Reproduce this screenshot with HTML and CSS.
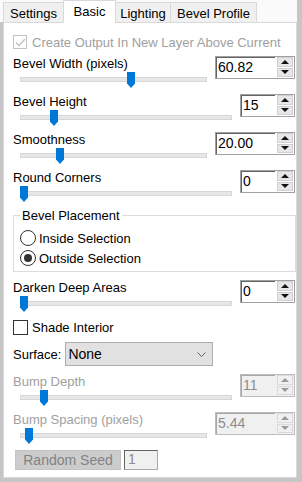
FILE: index.html
```html
<!DOCTYPE html>
<html>
<head>
  <link rel="stylesheet" href="styles.css">
</head>
<body>

<div class="window">
  <div class="tabs">
    <div class="tab tab-settings">Settings</div>
    <div class="tab tab-basic active">Basic</div>
    <div class="tab tab-lighting">Lighting</div>
    <div class="tab tab-profile">Bevel Profile</div>
  </div>

  <div class="page">
    <!-- disabled option -->
    <div class="check disabled">
      <span class="box">
        <svg width="11" height="9" viewBox="0 0 11 9"><polyline points="1,4.5 4,7.5 10,1" fill="none" stroke="#c2c2c2" stroke-width="1.3"/></svg>
      </span>
      Create Output In New Layer Above Current
    </div>

    <div class="slider-row">
      <div class="slider-col">
        <div class="label">Bevel Width (pixels)</div>
        <div class="track"><span class="thumb" style="left: 106px"></span></div>
      </div>
      <div class="spin wide">
        <span class="val">60.82</span>
        <span class="arrows"><span class="up"></span><span class="down"></span></span>
      </div>
    </div>

    <div class="slider-row">
      <div class="slider-col">
        <div class="label">Bevel Height</div>
        <div class="track"><span class="thumb" style="left: 29px"></span></div>
      </div>
      <div class="spin">
        <span class="val">15</span>
        <span class="arrows"><span class="up"></span><span class="down"></span></span>
      </div>
    </div>

    <div class="slider-row">
      <div class="slider-col">
        <div class="label">Smoothness</div>
        <div class="track"><span class="thumb" style="left: 35px"></span></div>
      </div>
      <div class="spin wide">
        <span class="val">20.00</span>
        <span class="arrows"><span class="up"></span><span class="down"></span></span>
      </div>
    </div>

    <div class="slider-row">
      <div class="slider-col">
        <div class="label">Round Corners</div>
        <div class="track"><span class="thumb" style="left: -1px"></span></div>
      </div>
      <div class="spin">
        <span class="val">0</span>
        <span class="arrows"><span class="up"></span><span class="down"></span></span>
      </div>
    </div>

    <fieldset class="group">
      <legend>Bevel Placement</legend>
      <div class="radio"><span class="circle"></span>Inside Selection</div>
      <div class="radio"><span class="circle on"></span>Outside Selection</div>
    </fieldset>

    <div class="slider-row darken">
      <div class="slider-col">
        <div class="label">Darken Deep Areas</div>
        <div class="track"><span class="thumb" style="left: -1px"></span></div>
      </div>
      <div class="spin">
        <span class="val">0</span>
        <span class="arrows"><span class="up"></span><span class="down"></span></span>
      </div>
    </div>

    <div class="check shade">
      <span class="box"></span>
      Shade Interior
    </div>

    <div class="surface">
      <span>Surface:</span>
      <div class="select">
        <span>None</span>
        <svg width="9" height="5" viewBox="0 0 9 5"><polyline points="0.5,0.5 4.5,4.5 8.5,0.5" fill="none" stroke="#606060" stroke-width="1"/></svg>
      </div>
    </div>

    <div class="slider-row disabled bump">
      <div class="slider-col">
        <div class="label">Bump Depth</div>
        <div class="track"><span class="thumb" style="left: 19px"></span></div>
      </div>
      <div class="spin">
        <span class="val">11</span>
        <span class="arrows"><span class="up"></span><span class="down"></span></span>
      </div>
    </div>

    <div class="slider-row disabled">
      <div class="slider-col">
        <div class="label">Bump Spacing (pixels)</div>
        <div class="track"><span class="thumb" style="left: 4px"></span></div>
      </div>
      <div class="spin wide">
        <span class="val">5.44</span>
        <span class="arrows"><span class="up"></span><span class="down"></span></span>
      </div>
    </div>

    <div class="seed-row">
      <div class="seed-btn">Random Seed</div>
      <div class="seed-val">1</div>
    </div>
  </div>
</div>

</body>
</html>
```

FILE: styles.css
```css
* {
  box-sizing: border-box;
}

body {
  margin: 0;
  font: 13px "Liberation Sans", Arial, sans-serif;
  color: #000;
}

/* outer window with the grey frame */
.window {
  width: 302px;
  height: 482px;
  display: flex;
  flex-direction: column;
  background: #c6c6c6;
  padding: 0 5px 4px 0;
}

/* tab strip */
.tabs {
  display: flex;
  align-items: flex-end;
  height: 22px;
  padding-left: 3px;
  background: #fafafa;
}
.tab {
  height: 20px;
  padding-top: 3px;
  line-height: 15px;
  text-align: center;
  white-space: nowrap;
  background: #f0f0f0;
  border: 1px solid #d9d9d9;
  border-bottom: none;
  margin-left: -1px;
}
.tab-settings { width: 61px; margin-left: 0; }
.tab-basic { width: 53px; }
.tab-lighting { width: 56px; }
.tab-profile { width: 87px; }
.tab.active {
  position: relative;
  z-index: 1;
  height: 23px;
  margin-bottom: -1px;
  background: #fff;
}

/* tab page */
.page {
  flex: 1;
  display: flex;
  flex-direction: column;
  margin-left: 3px;
  padding: 11px 1px 0 9px;
  background: #fff;
  border: 1px solid #d9d9d9;
}

/* check boxes */
.check {
  display: flex;
  align-items: center;
  gap: 5px;
  height: 16px;
  line-height: 15px;
  white-space: nowrap;
}
.check .box {
  width: 14px;
  height: 14px;
  display: flex;
  align-items: center;
  justify-content: center;
  border: 1px solid #333;
  background: #fff;
}
.check.disabled {
  color: #a0a0a0;
}
.check.disabled .box {
  border-color: #c4c4c4;
}
.check.shade {
  margin-top: 1px;
  height: 17px;
  gap: 4px;
}
.check.shade .box {
  width: 15px;
  height: 15px;
}

/* slider + spin rows */
.slider-row {
  display: flex;
  height: 38px;
}
.check + .slider-row {
  margin-top: 6px;
}
.slider-col {
  flex: 1;
  margin-right: 8px;
}
.label {
  height: 15px;
  line-height: 15px;
  white-space: nowrap;
}
.track {
  position: relative;
  height: 5px;
  margin: 6px 0 0 7px;
  background: #e7e7e7;
  border: 1px solid #d6d6d6;
}
.thumb {
  position: absolute;
  top: -6px;
  width: 8px;
  height: 16px;
  background: #0078d7;
  clip-path: polygon(0 0, 100% 0, 100% 72%, 50% 100%, 0 72%);
}

.spin {
  display: flex;
  width: 55px;
  height: 23px;
  background: #fff;
  border: 1px solid #a0a0a0;
}
.spin.wide {
  width: 80px;
}
.spin .val {
  flex: 1;
  padding-left: 1px;
  line-height: 19px;
  font-size: 14px;
  border-top: 1px solid #646464;
  border-left: 1px solid #646464;
}
.spin .arrows {
  width: 19px;
  display: flex;
  flex-direction: column;
  gap: 1px;
  padding: 0 1px 1px 2px;
}
.arrows span {
  flex: 1;
  display: flex;
  align-items: center;
  justify-content: center;
  background: #e6e6e6;
  border: 1px solid #d0d0d0;
}
.arrows .up::before,
.arrows .down::before {
  content: "";
  border-left: 4px solid transparent;
  border-right: 4px solid transparent;
}
.arrows .up::before {
  border-bottom: 4px solid #111;
}
.arrows .down::before {
  border-top: 4px solid #111;
}

/* disabled rows */
.slider-row.disabled .label {
  color: #a0a0a0;
}
.slider-row.disabled .spin {
  border-color: #bcbcbc;
  background: #f0f0f0;
}
.slider-row.disabled .val {
  color: #8d8d8d;
  border-color: #a8a8a8;
}
.slider-row.disabled .arrows span {
  background: #f0f0f0;
  border-color: #dadada;
}
.slider-row.disabled .arrows .up::before {
  border-bottom-color: #9a9a9a;
}
.slider-row.disabled .arrows .down::before {
  border-top-color: #9a9a9a;
}

/* group box */
.group {
  margin: 0 -1px 0 0;
  padding: 5px 6px 3px 6px;
  border: 1px solid #dcdcdc;
  min-width: 0;
}
.group legend {
  padding: 0 2px;
  line-height: 15px;
}
.radio {
  display: flex;
  align-items: center;
  gap: 3px;
  height: 20px;
}
.circle {
  width: 16px;
  height: 16px;
  display: flex;
  align-items: center;
  justify-content: center;
  border: 1px solid #333;
  border-radius: 50%;
}
.circle.on::before {
  content: "";
  width: 8px;
  height: 8px;
  border-radius: 50%;
  background: #333;
}

.slider-row.darken {
  margin-top: 8px;
}

/* surface dropdown */
.surface {
  display: flex;
  align-items: center;
  gap: 4px;
  height: 24px;
  margin-top: 6px;
}
.select {
  width: 148px;
  height: 24px;
  display: flex;
  align-items: center;
  justify-content: space-between;
  padding: 0 6px 0 2px;
  background: #e1e1e1;
  border: 1px solid #adadad;
  font-size: 14px;
}

.slider-row.bump {
  margin-top: 8px;
}

/* random seed */
.seed-row {
  display: flex;
  gap: 3px;
  height: 20px;
  padding-left: 2px;
}
.seed-btn {
  width: 106px;
  line-height: 18px;
  text-align: center;
  font-size: 14px;
  color: #838383;
  background: #cccccc;
  border: 1px solid #c4c4c4;
}
.seed-val {
  width: 34px;
  padding-left: 3px;
  line-height: 16px;
  font-size: 14px;
  color: #8d8d8d;
  background: #f0f0f0;
  border: 1px solid #a8a8a8;
  border-top-color: #646464;
  border-left-color: #646464;
  box-shadow: 0 0 0 0 #fff;
}
```
